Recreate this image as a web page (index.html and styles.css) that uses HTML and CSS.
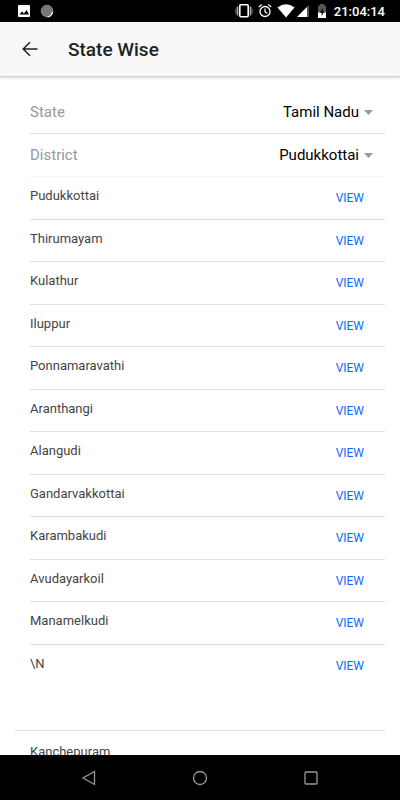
FILE: index.html
```
<!DOCTYPE html>
<html lang="en">
<head>
  <meta charset="UTF-8">
  <meta name="viewport" content="width=device-width, initial-scale=1.0">
  <title>State Wise</title>
  <link rel="stylesheet" href="styles.css">
</head>
<body>
  <div class="status-bar">
    <div class="status-left">
      <svg width="14" height="14" viewBox="0 0 14 14">
        <rect x="1" y="1" width="12" height="12" rx="1" fill="#fff"/>
        <path d="M2.500 10.500l2.500-3 2 2 2.500-3.500 2.500 4.500z" fill="#000"/>
      </svg>
      <svg width="14" height="14" viewBox="0 0 14 14">
        <circle cx="7" cy="7" r="6" fill="#777"/>
        <circle cx="7" cy="7" r="5.800" fill="none" stroke="#aaa" stroke-dasharray="1 1"/>
        <path d="M12.500 8a6 6 0 0 1-5 5" fill="none" stroke="#fff" stroke-width="1.200"/>
      </svg>
    </div>
    <div class="status-right">
      <svg width="18" height="16" viewBox="0 0 18 16">
        <rect x="4.800" y="1.800" width="8.400" height="12" rx="1" fill="none" stroke="#fff" stroke-width="1.600"/>
        <path d="M2.500 3.500v9M15.500 3.500v9" stroke="#aaa" stroke-width="1.600"/>
        <path d="M.8 5.500v5M17.200 5.500v5" stroke="#777"/>
      </svg>
      <svg class="alarm" width="14" height="16" viewBox="0 0 14 16">
        <circle cx="7" cy="8.500" r="5" fill="none" stroke="#fff" stroke-width="1.300"/>
        <path d="M7 5.500v3.300l2.300 1.500M.8 4l3-2.500M13.200 4l-3-2.500" fill="none" stroke="#fff" stroke-width="1.200"/>
      </svg>
      <svg class="wifi" width="18" height="16" viewBox="0 0 18 16">
        <path d="M.5 4.500Q9-2 17.500 4.500L9 14.500z" fill="#fff"/>
      </svg>
      <svg width="14" height="16" viewBox="0 0 14 16">
        <path d="M13 2v12H1z" fill="#555"/>
        <path d="M11 4v10H1z" fill="#fff"/>
      </svg>
      <svg class="battery" width="10" height="16" viewBox="0 0 10 16">
        <path d="M3 1h4v1.500h2V15H1V2.500h2z" fill="#555"/>
        <path d="M1 9.500h8V15H1z" fill="#fff"/>
        <path d="M5.800 5L3 9.800h1.700V13L7.300 8.500H5.800z" fill="#000"/>
      </svg>
      <span class="clock">21:04:14</span>
    </div>
  </div>

  <header class="toolbar">
    <button type="button" class="back" aria-label="Back">
      <svg width="16" height="16" viewBox="0 0 16 16">
        <path d="M15.500 8H1.500M8 1.200L1.200 8L8 14.800" fill="none" stroke="#222" stroke-width="1.500"/>
      </svg>
    </button>
    <h1>State Wise</h1>
  </header>

  <main class="content">
    <section class="card">
      <div class="field">
        <label for="state">State</label>
        <select id="state">
          <option>Tamil Nadu</option>
        </select>
      </div>
      <div class="field">
        <label for="district">District</label>
        <select id="district">
          <option>Pudukkottai</option>
          <option>Kanchepuram</option>
        </select>
      </div>
      <ul class="list">
        <li><span>Pudukkottai</span><button type="button" class="view">VIEW</button></li>
        <li><span>Thirumayam</span><button type="button" class="view">VIEW</button></li>
        <li><span>Kulathur</span><button type="button" class="view">VIEW</button></li>
        <li><span>Iluppur</span><button type="button" class="view">VIEW</button></li>
        <li><span>Ponnamaravathi</span><button type="button" class="view">VIEW</button></li>
        <li><span>Aranthangi</span><button type="button" class="view">VIEW</button></li>
        <li><span>Alangudi</span><button type="button" class="view">VIEW</button></li>
        <li><span>Gandarvakkottai</span><button type="button" class="view">VIEW</button></li>
        <li><span>Karambakudi</span><button type="button" class="view">VIEW</button></li>
        <li><span>Avudayarkoil</span><button type="button" class="view">VIEW</button></li>
        <li><span>Manamelkudi</span><button type="button" class="view">VIEW</button></li>
        <li><span>\N</span><button type="button" class="view">VIEW</button></li>
      </ul>
    </section>
    <div class="next-district">Kanchepuram</div>
  </main>

  <nav class="nav-bar">
    <button type="button" aria-label="Back">
      <svg width="16" height="16" viewBox="0 0 16 16">
        <path d="M13.500 1.500v13L2 8z" fill="none" stroke="#999" stroke-width="1.300"/>
      </svg>
    </button>
    <button type="button" aria-label="Home">
      <svg width="16" height="16" viewBox="0 0 16 16">
        <circle cx="8" cy="8" r="6.500" fill="none" stroke="#999" stroke-width="1.300"/>
      </svg>
    </button>
    <button type="button" aria-label="Recent apps">
      <svg width="16" height="16" viewBox="0 0 16 16">
        <rect x="2" y="2" width="12" height="12" rx="1" fill="none" stroke="#999" stroke-width="1.300"/>
      </svg>
    </button>
  </nav>
</body>
</html>
```

FILE: styles.css
```
* {
  box-sizing: border-box;
}

body {
  display: flex;
  flex-direction: column;
  height: 100vh;
  margin: 0;
  overflow: hidden;
  background-color: #fff;
  font-family: Roboto, sans-serif;
}

button {
  padding: 0;
  border: none;
  background: none;
  font-family: inherit;
  cursor: pointer;
}

svg {
  display: block;
}

.status-bar {
  display: flex;
  flex: none;
  justify-content: space-between;
  align-items: center;
  height: 22px;
  padding: 0 15px 0 17px;
  background-color: #000;
  color: #fff;
}

.status-left,
.status-right {
  display: flex;
  align-items: center;
}

.status-left {
  gap: 9px;
}

.alarm {
  margin-left: 5px;
}

.wifi {
  margin: 0 1px 0 5px;
}

.battery {
  margin: 0 7px;
}

.clock {
  font-size: 13px;
  font-weight: 500;
}

.toolbar {
  display: flex;
  flex: none;
  align-items: center;
  gap: 30px;
  height: 55px;
  padding: 0 22px;
  border-bottom: 1px solid #d4d4d4;
  background-color: #f8f8f8;
  box-shadow: 0 1px 3px rgba(0, 0, 0, 0.15);
}

.toolbar h1 {
  margin: 0;
  color: #222;
  font-size: 19px;
  font-weight: 500;
}

.content {
  display: flex;
  flex: 1;
  flex-direction: column;
  min-height: 0;
  padding: 14px 15px 0;
  overflow: hidden;
}

.card {
  display: flex;
  flex: 1;
  flex-direction: column;
  padding: 0 0 44px 15px;
  border-bottom: 1px solid #dedede;
}

.field {
  display: flex;
  justify-content: space-between;
  align-items: center;
  height: 43px;
  padding-right: 12px;
  border-bottom: 1px solid #dedede;
}

.field + .field {
  border-color: #f4f4f4;
}

.field label {
  color: #999;
  font-size: 15px;
}

.field select {
  appearance: none;
  padding: 0 14px 0 0;
  border: none;
  background: url("data:image/svg+xml,%3Csvg xmlns='http://www.w3.org/2000/svg' width='9' height='5'%3E%3Cpath d='M0 0h9L4.500 5z' fill='%23999'/%3E%3C/svg%3E") no-repeat right center;
  color: #000;
  font-family: inherit;
  font-size: 15px;
  text-align-last: right;
}

/* rows share the height that is left in the card */
.list {
  display: flex;
  flex: 1;
  flex-direction: column;
  margin: 0;
  padding: 0;
  list-style: none;
}

.list li {
  display: flex;
  flex: 1;
  justify-content: space-between;
  align-items: flex-start;
  min-height: 40px;
  padding: 11px 21px 0 0;
  border-bottom: 1px solid #dedede;
}

.list li:last-child {
  border-bottom: none;
}

.list span,
.next-district {
  color: #444;
  font-size: 13px;
  line-height: 16px;
}

.view {
  padding-top: 2px;
  color: #0a6cff;
  font-size: 12px;
  font-weight: 400;
  line-height: 16px;
}

.next-district {
  height: 24px;
  padding: 13px 15px 0;
  overflow: hidden;
}

.nav-bar {
  display: flex;
  flex: none;
  justify-content: space-around;
  align-items: center;
  height: 45px;
  padding: 0 33px;
  background-color: #000;
}
```
